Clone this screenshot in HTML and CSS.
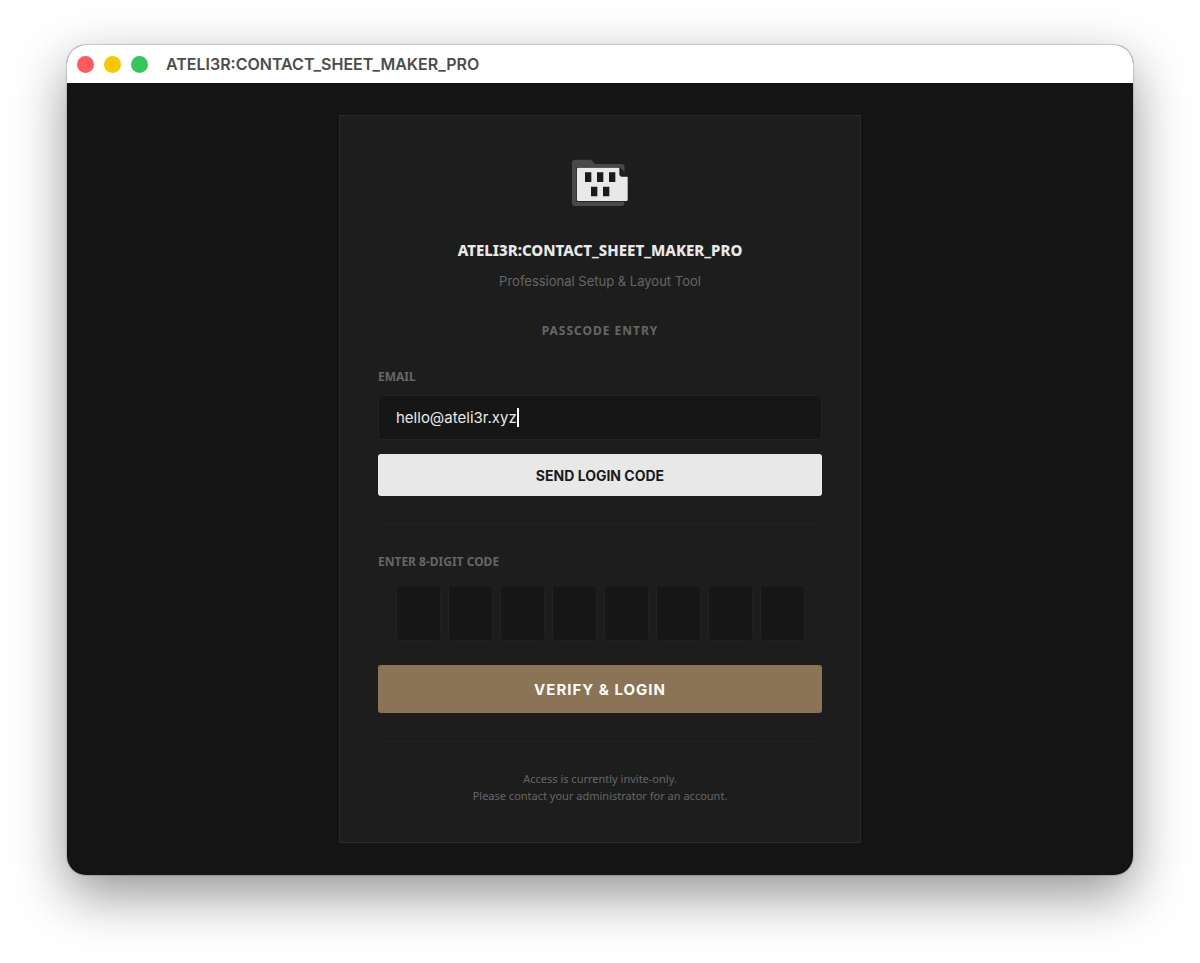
FILE: index.html
```html
<!DOCTYPE html>
<html lang="en">
<head>
    <meta charset="UTF-8">
    <title>ATELI3R:CONTACT_SHEET_MAKER_PRO</title>
    <meta name="viewport" content="width=device-width,initial-scale=1.0">
    <link rel="stylesheet" href="styles.css">
</head>
<body>
<div class="window">
    <div class="titlebar">
        <span class="dot red"></span>
        <span class="dot yellow"></span>
        <span class="dot green"></span>
        <span class="titlebar-text">ATELI3R:CONTACT_SHEET_MAKER_PRO</span>
    </div>
    <main class="main">
        <form class="card">
            <svg class="logo" viewBox="0 0 168 144" aria-hidden="true">
                <path fill="#494949" d="M10 2H52Q57 2 61 6L70 15H149Q157 15 157 23V132Q157 141 148 141H9Q0 141 0 132V11Q0 2 10 2Z"/>
                <path fill="#1d1d1d" d="M14 25H143L157 38V56H170V128H14Z"/>
                <path fill="#494949" d="M144 22H157V38Z"/>
                <path fill="#e8e8e8" d="M19 26H142V46Q142 53 149 53H167V122Q167 126 163 126H19Q15 126 15 122V30Q15 26 19 26Z"/>
                <path fill="#1a1a1a" d="M39 40h19v29H39zM75 40h19v29H75zM111 40h19v29H111zM57 83h19v29H57zM93 83h19v29H93z"/>
            </svg>
            <h1 class="title">ATELI3R:CONTACT_SHEET_MAKER_PRO</h1>
            <p class="subtitle">Professional Setup &amp; Layout Tool</p>
            <h2 class="section">PASSCODE ENTRY</h2>

            <label class="label" for="email">EMAIL</label>
            <div class="field">
                <input class="email" type="email" id="email" value="hello@ateli3r.xyz">
                <span class="caret"></span>
            </div>
            <button class="btn send" type="button">SEND LOGIN CODE</button>

            <fieldset class="code">
                <legend class="label">ENTER 8-DIGIT CODE</legend>
                <div class="digits">
                    <input type="text" maxlength="1" inputmode="numeric" aria-label="Digit 1">
                    <input type="text" maxlength="1" inputmode="numeric" aria-label="Digit 2">
                    <input type="text" maxlength="1" inputmode="numeric" aria-label="Digit 3">
                    <input type="text" maxlength="1" inputmode="numeric" aria-label="Digit 4">
                    <input type="text" maxlength="1" inputmode="numeric" aria-label="Digit 5">
                    <input type="text" maxlength="1" inputmode="numeric" aria-label="Digit 6">
                    <input type="text" maxlength="1" inputmode="numeric" aria-label="Digit 7">
                    <input type="text" maxlength="1" inputmode="numeric" aria-label="Digit 8">
                </div>
            </fieldset>
            <button class="btn verify" type="submit">VERIFY &amp; LOGIN</button>

            <p class="note">Access is currently invite-only.<br>Please contact your administrator for an account.</p>
        </form>
    </main>
</div>
</body>
</html>
```
FILE: styles.css
```css
* {
    margin: 0;
    padding: 0;
    box-sizing: border-box;
}

body {
    min-height: 100vh;
    padding: 45px 67px 88px;
    display: flex;
    background: #fff;
    color: #e8e8e8;
    font-family: Inter, "Liberation Sans", sans-serif;
}

.window {
    flex: 1;
    display: flex;
    flex-direction: column;
    overflow: hidden;
    border-radius: 19px;
    background: #141414;
    box-shadow: 0 0 1px 1px rgba(0, 0, 0, .15), 0 20px 54px rgba(0, 0, 0, .42);
}

.titlebar {
    height: 38px;
    padding: 0 10px;
    display: flex;
    align-items: center;
    gap: 10px;
    background: #fff;
}

.dot {width: 17px;height: 17px;border-radius: 50%;}

.red {background: #ff5a60;}

.yellow {background: #fac800;}

.green {background: #34c759;}

.titlebar-text {margin-left: 8px;color: #4c4c4c;font-size: 16px;font-weight: 600;}

.main {
    flex: 1;
    padding: 32px 16px;
    display: flex;
    justify-content: center;
}

.card {
    width: 100%;
    max-width: 522px;
    padding: 43px 38px 38px;
    display: flex;
    flex-direction: column;
    background: #1d1d1d;
    border: 1px solid #2a2a2a;
}

.logo {width: 56px;height: 48px;margin: 0 auto 31px;}

.title {font-family: "Noto Sans", sans-serif;font-size: 15px;line-height: 24px;font-weight: 800;text-align: center;}

.subtitle {margin-top: 9px;color: #666;font-size: 13px;line-height: 20px;text-align: center;}

.section {margin: 31px 0 28px;color: #666;font-family: "Noto Sans", sans-serif;font-size: 12px;line-height: 18px;font-weight: 700;letter-spacing: 1px;text-align: center;}

.label {display: block;color: #666;font-family: "Noto Sans", sans-serif;font-size: 12px;line-height: 18px;font-weight: 700;}

.field {margin: 9px 0 14px;position: relative;}

.email {
    display: block;
    width: 100%;
    height: 45px;
    padding: 0 17px;
    background: #161616;
    border: 1px solid #232323;
    border-radius: 4px;
    color: #e8e8e8;
    font-family: inherit;
    font-size: 15px;
}

/* text cursor at the end of the address */
.caret {position: absolute;left: 139px;top: 13px;width: 2px;height: 19px;background: #fff;}

.btn {
    width: 100%;
    border: 0;
    border-radius: 3px;
    font-family: inherit;
    font-weight: 700;
    text-align: center;
}

.send {height: 42px;background: #e8e8e8;color: #1a1a1a;font-size: 14px;}

.code {
    margin: 28px 0 24px;
    padding-top: 28px;
    border: 0;
    border-top: 1px solid #222;
}

.code .label {float: left;width: 100%;margin-bottom: 14px;}

.digits {clear: both;display: flex;justify-content: center;gap: 7px;}

.digits input {
    width: 45px;
    height: 56px;
    min-width: 0;
    background: #161616;
    border: 1px solid #212121;
    border-radius: 4px;
    color: #e8e8e8;
    font-size: 20px;
    text-align: center;
}

.verify {height: 48px;background: #8b7355;color: #fff;font-size: 15px;letter-spacing: 1px;}

.note {
    margin-top: 28px;
    padding-top: 28px;
    border-top: 1px solid #222;
    color: #666;
    font-family: "Noto Sans", sans-serif;
    font-size: 11px;
    line-height: 17px;
    text-align: center;
}
```
